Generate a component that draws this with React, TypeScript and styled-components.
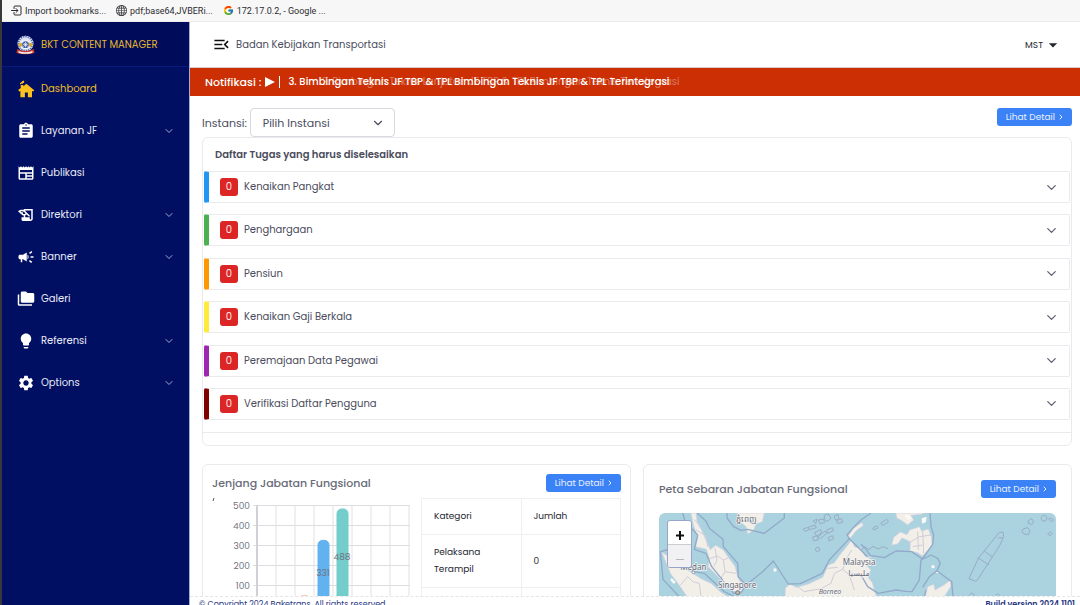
import React from "react";
import styled, { createGlobalStyle } from "styled-components";
import {
  MdAssignment,
  MdCampaign,
  MdFolderCopy,
  MdHistoryEdu,
  MdLightbulb,
  MdMenuOpen,
  MdNewspaper,
  MdSettings,
  MdArrowDropDown,
} from "react-icons/md";
import { FcGoogle } from "react-icons/fc";
import { BsGlobe } from "react-icons/bs";
import { ChevronDown, ChevronRight } from "lucide-react";

const GlobalStyle = createGlobalStyle`
  *, *::before, *::after { box-sizing: border-box; }
  body {
    margin: 0;
    background: #fff;
    color: #4a4c5c;
    font-family: Poppins, Inter, "Liberation Sans", sans-serif;
    font-size: 10px;
    line-height: 16px;
    overflow: hidden;
  }
  button, select { font: inherit; color: inherit; }
  h2, p, ul { margin: 0; padding: 0; }
`;

const Window = styled.div`
  display: flex;
  flex-direction: column;
  height: 100vh;
  border-left: 2px solid #38383c;
`;

const BookmarkBar = styled.nav`
  display: flex;
  flex: none;
  align-items: center;
  gap: 10px;
  height: 22px;
  padding: 0 9px;
  background: #f7f7f8;
  border-bottom: 1px solid #ececee;
`;

const Bookmark = styled.a`
  display: flex;
  align-items: center;
  gap: 3px;
  color: #2c2c30;
  font-family: Roboto, "Liberation Sans", sans-serif;
  font-size: 9px;
  text-decoration: none;
  white-space: nowrap;
  svg { width: 11px; height: 11px; flex: none; }
`;

const Shell = styled.div`
  display: flex;
  flex: 1;
  min-height: 0;
`;

const Sidebar = styled.aside`
  flex: none;
  width: 188px;
  background: #000f62;
  border-right: 1px solid #a9add6;
`;

const Brand = styled.div`
  display: flex;
  align-items: center;
  gap: 6px;
  height: 45px;
  padding: 1px 0 0 14px;
  border-bottom: 1px solid #071a7c;
  background: #000c59;
  color: #e5b52c;
  white-space: nowrap;
`;

const NavList = styled.ul`
  list-style: none;
`;

const NavLink = styled.a<{ $active?: boolean }>`
  display: flex;
  align-items: center;
  gap: 6px;
  height: 42px;
  padding: 1px 14px 0 15px;
  color: ${(p) => (p.$active ? "#f0bd27" : "#e9ebf7")};
  text-decoration: none;
  > svg:first-child { width: 18px; height: 18px; flex: none; color: ${(p) => (p.$active ? "#fbc11e" : "#fff")}; }
  > svg:last-child:not(:first-child) { margin-left: auto; color: #a3a9d4; }
`;

const Main = styled.div`
  display: flex;
  flex: 1;
  flex-direction: column;
  min-width: 0;
`;

const TopBar = styled.header`
  display: flex;
  flex: none;
  align-items: center;
  gap: 5px;
  height: 46px;
  padding: 0 17px 0 22px;
  border-bottom: 1px solid #dcc9c9;
`;

const IconButton = styled.button`
  display: flex;
  padding: 0;
  border: 0;
  background: none;
  color: #111;
`;

const UserButton = styled(IconButton)`
  align-items: center;
  margin-left: auto;
  color: #25262f;
  font-size: 9px;
`;

const Notice = styled.div`
  display: flex;
  flex: none;
  align-items: center;
  height: 28px;
  padding-left: 15px;
  background: #cb2f03;
  color: #fff;
  font-size: 11px;
  font-weight: 500;
  white-space: nowrap;
  svg { margin: 0 7px 0 4px; }
`;

const Ticker = styled.div`
  position: relative;
  font-size: 10px;
`;

const FadingLine = styled.span`
  position: absolute;
  right: -10px;
  top: 0;
  font-weight: 400;
  opacity: 0.35;
`;

const Content = styled.main`
  flex: 1;
  min-height: 0;
  padding: 12px 8px 0 12px;
  overflow: hidden;
`;

const FilterRow = styled.div`
  display: flex;
  align-items: flex-start;
  justify-content: space-between;
`;

const Filter = styled.div`
  display: flex;
  align-items: center;
  gap: 3px;
  font-size: 11px;
`;

const SelectBox = styled.div`
  display: grid;
  align-items: center;
  width: 145px;
  > * { grid-area: 1 / 1; }
  svg { justify-self: end; margin-right: 10px; pointer-events: none; }
`;

const Select = styled.select`
  width: 100%;
  height: 29px;
  padding: 0 12px;
  appearance: none;
  border: 1px solid #d7d9df;
  border-radius: 4px;
  background: #fff;
`;

const DetailButton = styled.button`
  display: flex;
  flex: none;
  align-items: center;
  gap: 2px;
  height: 18px;
  padding: 0 7px 0 9px;
  border: 0;
  border-radius: 3px;
  background: #3b82f6;
  color: #e8f0ff;
  font-size: 9px;
  white-space: nowrap;
`;

const Card = styled.section`
  border: 1px solid #e9eaed;
  border-radius: 6px;
  background: #fff;
`;

const TaskCard = styled(Card)`
  padding-bottom: 12px;
`;

const TaskTitle = styled.h2`
  padding: 8px 12px;
  font-size: 10px;
  font-weight: 600;
  line-height: 17px;
`;

const TaskList = styled.div`
  display: flex;
  flex-direction: column;
  justify-content: space-between;
  height: 262px;
  padding: 0 1px 12px;
  border-bottom: 1px solid #e9eaed;
`;

const Task = styled.button<{ $color: string }>`
  display: flex;
  align-items: center;
  gap: 6px;
  width: 100%;
  height: 32px;
  padding: 0 10px 0 11px;
  border: 1px solid #e9eaed;
  border-left: 5px solid ${(p) => p.$color};
  border-radius: 2px;
  background: #fff;
  text-align: left;
  svg { margin-left: auto; }
`;

const Count = styled.span`
  width: 18px;
  border-radius: 3px;
  background: #dc2626;
  color: #fde4e4;
  line-height: 18px;
  text-align: center;
`;

const CardGrid = styled.div`
  display: grid;
  grid-template-columns: repeat(2, minmax(0, 1fr));
  gap: 12px;
  margin-top: 18px;
`;

const LevelCard = styled(Card)`
  padding: 9px;
`;

const MapCard = styled(Card)`
  padding: 15px;
`;

const CardHead = styled.div`
  display: flex;
  align-items: center;
  justify-content: space-between;
`;

const CardTitle = styled.h2`
  color: #686b78;
  font-size: 11px;
  font-weight: 500;
  line-height: 18px;
`;

const LevelBody = styled.div`
  display: grid;
  grid-template-columns: minmax(0, 1fr) 200px;
  gap: 10px;
  padding-top: 6px;
`;

const Chart = styled.svg`
  display: block;
  width: 200px;
  height: 150px;
  text { font-size: 9px; fill: #707380; }
`;

const Table = styled.table`
  border-collapse: collapse;
  align-self: start;
  color: #25262f;
  font-size: 9px;
  line-height: 17px;
  th, td {
    width: 50%;
    padding: 9px 36px 9px 12px;
    border: 1px solid #eeeff1;
    font-weight: 400;
    text-align: left;
  }
`;

const MapFrame = styled.div`
  position: relative;
  height: 240px;
  margin-top: 15px;
  border-radius: 6px;
  background: #aad3df;
  overflow: hidden;
`;

const MapArt = styled.svg`
  display: block;
  width: 100%;
  height: 100%;
`;

const ZoomControl = styled.div`
  position: absolute;
  left: 8px;
  top: 7px;
  width: 25px;
  border: 1px solid #9aa5c9;
  border-radius: 3px;
  overflow: hidden;
`;

const ZoomButton = styled.button`
  display: grid;
  place-items: center;
  width: 100%;
  height: 23px;
  padding: 5px 0 0;
  border: 0;
  background: #fff;
  color: #111;
  &:disabled { background: #f1f1f3; color: #b7b7bb; border-top: 1px solid #ccc; }
`;

const Footer = styled.footer`
  display: flex;
  flex: none;
  justify-content: space-between;
  height: 9px;
  padding: 2px 5px 0 9px;
  border-top: 1px dashed #e5e5e8;
  color: #25357f;
  font-size: 8px;
  line-height: 12px;
  font-weight: 400;
  strong { font-weight: 600; }
`;

const ImportIcon = () => (
  <svg viewBox="0 0 22 22" fill="none" stroke="currentColor" strokeWidth="2" strokeLinecap="round" strokeLinejoin="round">
    <path d="M6 7V4a2 2 0 0 1 2-2h10a2 2 0 0 1 2 2v14a2 2 0 0 1-2 2H8a2 2 0 0 1-2-2v-3M1 11h12M10 7l4 4-4 4" />
  </svg>
);

const HomeIcon = () => (
  <svg viewBox="0 0 24 24" fill="currentColor">
    <path d="M12.500 5 23 13.500 21.500 15.200 20 14.500V23H14.500V16.500H10.500V23H4.500V14.500L3 15.200 1.500 13.400 5 10.500V6.500H8.500V8.200Z" />
    <path d="M4 5.500C4 2.500 6 3.500 6.500 2.300 7 1 8 .8 9.500 1V3.500C8 3.500 8 5 6.500 5 5.500 5 5.500 5 5.500 5.500H4Z" />
  </svg>
);

const Emblem = () => (
  <svg width="19" height="20" viewBox="0 0 54 60">
    <circle cx="27" cy="26" r="24" fill="#dfe3f1" />
    <circle cx="27" cy="26" r="21" fill="none" stroke="#4b65ad" strokeWidth="5" strokeDasharray="4 3" />
    <ellipse cx="27" cy="29" rx="18" ry="13" fill="#f3f5fa" />
    <path d="M5 28Q13 19 19 27L14 36Q7 37 5 28ZM49 28Q41 19 35 27L40 36Q47 37 49 28Z" fill="#d8ac31" />
    <circle cx="27" cy="29" r="10" fill="#3c5ba7" />
    <path d="M27 21v16M19 29h16M21 23l12 12M33 23 21 35" stroke="#fff" strokeWidth="2" />
    <path d="M2 42Q27 54 52 42L54 54Q27 62 0 54Z" fill="#c93a2c" />
    <path d="M6 48Q27 56 48 48V53Q27 60 6 53Z" fill="#f5eeee" />
  </svg>
);

const navItems = [
  { label: "Dashboard", icon: <HomeIcon />, active: true },
  { label: "Layanan JF", icon: <MdAssignment />, nested: true },
  { label: "Publikasi", icon: <MdNewspaper /> },
  { label: "Direktori", icon: <MdHistoryEdu />, nested: true },
  { label: "Banner", icon: <MdCampaign />, nested: true },
  { label: "Galeri", icon: <MdFolderCopy /> },
  { label: "Referensi", icon: <MdLightbulb />, nested: true },
  { label: "Options", icon: <MdSettings />, nested: true },
];

const tasks = [
  { label: "Kenaikan Pangkat", color: "#2196f3" },
  { label: "Penghargaan", color: "#4caf50" },
  { label: "Pensiun", color: "#ff9800" },
  { label: "Kenaikan Gaji Berkala", color: "#ffeb3b" },
  { label: "Peremajaan Data Pegawai", color: "#9c27b0" },
  { label: "Verifikasi Daftar Pengguna", color: "#800000" },
];

const bars = [
  { slot: 2, value: 56, color: "#f9cdb8" },
  { slot: 3, value: 331, color: "#62b2f0" },
  { slot: 4, value: 488, color: "#73cdca" },
];

const DetailLink = () => (
  <DetailButton>
    Lihat Detail
    <ChevronRight size={8} strokeWidth={3} />
  </DetailButton>
);

const LevelChart = () => {
  const y = (v: number) => 107 - v / 5 + 0.5;
  return (
    <Chart viewBox="0 0 200 150" role="img" aria-label="Jenjang Jabatan Fungsional">
      <path d="M2 0 1 3" stroke="#555" />
      {[0, 100, 200, 300, 400, 500].map((v) => (
        <g key={v}>
          <path d={`M41 ${y(v)}H198`} stroke="#dcdde1" />
          <text x="38" y={y(v) + 3} textAnchor="end">{v}</text>
        </g>
      ))}
      {[0, 1, 2, 3, 4, 5, 6, 7, 8].map((i) => (
        <path key={i} d={`M${45 + i * 19} 7.500V107`} stroke={i ? "#e0e1e4" : "#cfd1d6"} strokeWidth={i ? 1 : 2} />
      ))}
      {bars.map((b) => {
        const x = 49 + b.slot * 19;
        return (
          <g key={b.slot}>
            <path d={`M${x} 107V${y(b.value) + 6}q0-5 5.500-5t5.500 5V107Z`} fill={b.color} stroke={b.color} />
            {b.value > 100 && <text x={x + 5} y={(y(b.value) + 115) / 2} textAnchor="middle">{b.value}</text>}
          </g>
        );
      })}
    </Chart>
  );
};

const RegionMap = () => (
  <MapArt viewBox="54 189 1194 720" preserveAspectRatio="xMinYMin slice" aria-hidden="true">
    <g fill="#f2efe9" stroke="#d3cfe0" strokeWidth="2">
      <path d="M150 189 157 225 170 262 164 290 196 298 205 326 201 350 220 368 247 396 278 424 303 423 305 405 290 382 283 350 263 323 247 300 224 286 208 299 195 270 182 240 169 220 165 189Z" />
      <path d="M62 306 90 324 110 351 145 363 178 385 210 400 240 427 260 440 370 560 380 700 190 520 138 440 118 410 88 370Z" />
      <path d="M288 189 300 218 315 230 320 252 338 240 345 222 364 215 370 189Z" />
      <path d="M433 414 447 402 466 412 502 402 545 382 562 345 580 338 600 310 615 292 632 270 641 291 660 294 671 318 690 324 685 337 673 344 690 360 680 380 694 398 706 440 680 500 660 640 480 620 430 500Z" />
      <path d="M764 189 768 205 783 212 800 225 818 210 810 196 840 193 850 189Z" />
      <path d="M752 285 758 262 778 246 798 254 806 240 835 230 842 243 862 237 872 263 873 285 862 300 844 318 830 308 807 303 808 275 783 264 770 282Z" />
      <path d="M853 440 860 410 878 403 882 420 910 404 928 390 930 408 910 440Z" />
      <path d="M620 260 638 235 662 218 667 226 645 243 628 264Z" />
    </g>
    <g fill="#faf9f6">
      <circle cx="402" cy="360" r="5" />
      <circle cx="876" cy="350" r="5" />
      <circle cx="889" cy="366" r="4" />
      <path d="m800 193 12 12-10 5-12-12ZM842 205l15-5-2 16-12 5ZM82 330l12 15-8 3-10-12ZM92 384l12 12-6 6-10-12Z" />
    </g>
    <g fill="none" stroke="#d2cbd8" strokeWidth="3">
      <path d="M165 240 194 256 200 290M205 326 230 318 247 330 263 323M222 295 228 330 218 350M247 330 252 365 285 370M252 365 240 385M160 210 179 225M118 405 140 380 155 395 175 400 180 440M300 215 335 205 350 215" />
      <path d="M470 410 490 425 540 416 570 400 580 370 605 358 620 320 632 300M605 358 625 375 640 420M560 355 590 352" />
      <path d="M805 278 835 260 870 255M830 245 832 300M845 240 848 310M815 290 845 285" />
    </g>
    <g fill="none" stroke="#93a9c9" strokeWidth="4" strokeLinejoin="round">
      <path d="M125 189 132 213 170 255 160 298 195 310 212 350 278 430 300 428 315 405 364 366 397 333 432 387 442 402 478 401 544 370 565 330 625 266 680 320" />
      <path d="M168 189 195 213 205 235 246 268 247 290 290 340 292 380 315 405" />
      <path d="M58 305 76 300 130 335 160 365 190 370 250 425 280 440M58 305 66 388 115 440" />
      <path d="M258 189V204L278 230 300 241 320 238 370 250 430 204V189" />
      <path d="M625 266 618 255 635 235 660 210 690 189M660 283 675 298 688 316 730 323 765 303 812 305 844 327 875 283 878 255 870 230 867 189" />
      <path d="M660 375 680 410 712 430 765 420 795 424 813 425 835 390 840 330 870 315 890 325 898 340 888 362 932 395 936 440" />
      <path d="M888 362 865 380 845 412M850 440 855 420" />
    </g>
    <g fill="none" stroke="#9aabc4" strokeWidth="3">
      <path d="m486 238 12-6 7 7-13 5ZM502 232l20-7 4 8-18 6ZM516 213l12-6-4 14ZM532 210l15-3 4 10-13 5ZM550 196l12-4 8 12-9 10-11-5ZM580 198l11-5 3 13-11 4ZM520 248l19-9 3 9-15 10ZM532 260l20-17 5 7-19 16ZM557 240l17-7 4 9-18 8ZM515 261l14-4 3 13-14 2ZM562 262l12-5 4 9-14 7ZM586 213l15-7 4 11-15 3ZM525 294l8-3 4 9-9 5-5-5Z" />
      <path d="M695 235l12-8 4 6-12 7ZM719 220l18-12 6 7-17 11ZM660 300l12-10 12 9 12-10 15 8 15-7 15 6" />
      <path d="M984 386 1012 325 1074 248 1086 246 1088 260 1077 285 1010 389 1004 394ZM1010 323 1044 345M1030 303 1053 320M1072 263 1086 264" />
      <path d="m1146 237 14-4 7 9-5 12-13-2-6-7ZM1162 212l10-6 6 9-6 9-11-5ZM1200 203l8-8 9 5v10l-12 4ZM1223 207l8-3 7 6-7 5ZM1220 252l7-7 7 6-7 6ZM984 435l8-6 10 7M1063 437l7-6 8 6" />
    </g>
    <g fill="#666a76" stroke="#f5f5f5" strokeWidth="4" paintOrder="stroke" fontFamily="Noto Sans, sans-serif" fontSize="24">
      <text x="118" y="360">Medan</text>
      <text x="231" y="414">Singapore</text>
      <text x="605" y="346">Malaysia</text>
      <text x="622" y="379" fontFamily="DejaVu Sans, sans-serif">مليسيا</text>
      <text x="533" y="431" fontSize="21" fontStyle="italic">Borneo</text>
      <text x="286" y="216">ភ្នំពេញ</text>
    </g>
    <circle cx="157" cy="367" r="4" fill="#fff" stroke="#777" strokeWidth="2" />
    <circle cx="290" cy="428" r="6" fill="#bbb" stroke="#777" strokeWidth="3" />
  </MapArt>
);

export default function App() {
  return (
    <Window>
      <GlobalStyle />
      <BookmarkBar aria-label="Bookmarks">
        <Bookmark href="#"><ImportIcon />Import bookmarks...</Bookmark>
        <Bookmark href="#"><BsGlobe />pdf;base64,JVBERi...</Bookmark>
        <Bookmark href="#"><FcGoogle />172.17.0.2, - Google ...</Bookmark>
      </BookmarkBar>
      <Shell>
        <Sidebar>
          <Brand><Emblem />BKT CONTENT MANAGER</Brand>
          <NavList>
            {navItems.map((item) => (
              <li key={item.label}>
                <NavLink href="#" $active={item.active}>
                  {item.icon}
                  {item.label}
                  {item.nested && <ChevronDown size={12} strokeWidth={2} />}
                </NavLink>
              </li>
            ))}
          </NavList>
        </Sidebar>
        <Main>
          <TopBar>
            <IconButton aria-label="Toggle menu"><MdMenuOpen size={19} stroke="currentColor" /></IconButton>
            <span>Badan Kebijakan Transportasi</span>
            <UserButton>MST <MdArrowDropDown size={20} /></UserButton>
          </TopBar>
          <Notice>
            Notifikasi :
            <svg width="16" height="12" viewBox="0 0 16 12" fill="#fff"><path d="M0 1v10l10-5ZM14 0h1v12h-1Z" /></svg>
            <Ticker>
              3. Bimbingan Teknis JF TBP &amp; TPL Bimbingan Teknis JF TBP &amp; TPL Terintegrasi
              <FadingLine aria-hidden="true">2. Bimbingan Teknis Lanjutan JF TBP &amp; TPL Bimbingan Teknis Terintegrasi</FadingLine>
            </Ticker>
          </Notice>
          <Content>
            <FilterRow>
              <Filter>
                <label htmlFor="instansi">Instansi:</label>
                <SelectBox>
                  <Select id="instansi"><option>Pilih Instansi</option></Select>
                  <ChevronDown size={14} />
                </SelectBox>
              </Filter>
              <DetailLink />
            </FilterRow>
            <TaskCard>
              <TaskTitle>Daftar Tugas yang harus diselesaikan</TaskTitle>
              <TaskList>
                {tasks.map((t) => (
                  <Task key={t.label} $color={t.color}>
                    <Count>0</Count>
                    {t.label}
                    <ChevronDown size={15} color="#5d6070" />
                  </Task>
                ))}
              </TaskList>
            </TaskCard>
            <CardGrid>
              <LevelCard>
                <CardHead>
                  <CardTitle>Jenjang Jabatan Fungsional</CardTitle>
                  <DetailLink />
                </CardHead>
                <LevelBody>
                  <LevelChart />
                  <Table>
                    <thead>
                      <tr><th>Kategori</th><th>Jumlah</th></tr>
                    </thead>
                    <tbody>
                      <tr><td>Pelaksana Terampil</td><td>0</td></tr>
                      <tr><td>&nbsp;</td><td>&nbsp;</td></tr>
                    </tbody>
                  </Table>
                </LevelBody>
              </LevelCard>
              <MapCard>
                <CardHead>
                  <CardTitle>Peta Sebaran Jabatan Fungsional</CardTitle>
                  <DetailLink />
                </CardHead>
                <MapFrame>
                  <RegionMap />
                  <ZoomControl>
                    <ZoomButton aria-label="Zoom in">
                      <svg width="10" height="10" viewBox="0 0 10 10"><path d="M5 1v9M1 5.500h8" stroke="currentColor" strokeWidth="2" /></svg>
                    </ZoomButton>
                    <ZoomButton aria-label="Zoom out" disabled>
                      <svg width="10" height="10" viewBox="0 0 10 10"><path d="M1 5.500h8" stroke="currentColor" /></svg>
                    </ZoomButton>
                  </ZoomControl>
                </MapFrame>
              </MapCard>
            </CardGrid>
          </Content>
          <Footer>
            <span>© Copyright 2024 Baketrans. All rights reserved</span>
            <strong>Build version 2024.1101</strong>
          </Footer>
        </Main>
      </Shell>
    </Window>
  );
}
